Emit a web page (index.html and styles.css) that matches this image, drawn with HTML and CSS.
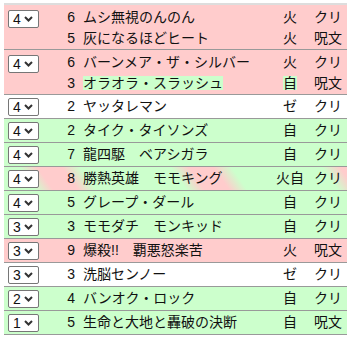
FILE: index.html
```html
<!DOCTYPE html>
<html lang="ja">
<head>
    <meta charset="UTF-8">
    <title>デッキリスト</title>
    <link rel="stylesheet" href="styles.css">
</head>
<body>

<div class="deck">
    <table class="cards">
        <colgroup>
            <col class="c-num">
            <col class="c-cost">
            <col class="c-name">
            <col class="c-civ">
            <col class="c-type">
            <col class="c-more">
        </colgroup>
        <thead>
            <tr>
                <th>枚数</th>
                <th>C</th>
                <th class="name">名前</th>
                <th>文明</th>
                <th class="type">種類</th>
                <th></th>
            </tr>
        </thead>
        <tbody>
            <tr class="fire twin">
                <td><div class="sel"><span>4</span><svg width="9" height="6" viewBox="0 0 9 6"><path d="M1 1 L4.5 4.5 L8 1"/></svg></div></td>
                <td class="cost"><div>6</div><div>5</div></td>
                <td class="name"><div>ムシ無視のんのん</div><div>灰になるほどヒート</div></td>
                <td class="civ"><div>火</div><div>火</div></td>
                <td class="type"><div>クリ</div><div>呪文</div></td>
                <td class="more"><div class="box"></div></td>
            </tr>
            <tr class="fire twin">
                <td><div class="sel"><span>4</span><svg width="9" height="6" viewBox="0 0 9 6"><path d="M1 1 L4.5 4.5 L8 1"/></svg></div></td>
                <td class="cost"><div>6</div><div>3</div></td>
                <td class="name"><div>バーンメア・ザ・シルバー</div><div><span class="hl">オラオラ・スラッシュ</span></div></td>
                <td class="civ"><div>火</div><div><span class="hl">自</span></div></td>
                <td class="type"><div>クリ</div><div>呪文</div></td>
                <td class="more"><div class="box"></div></td>
            </tr>
            <tr class="zero">
                <td><div class="sel"><span>4</span><svg width="9" height="6" viewBox="0 0 9 6"><path d="M1 1 L4.5 4.5 L8 1"/></svg></div></td>
                <td class="cost">2</td>
                <td class="name">ヤッタレマン</td>
                <td class="civ">ゼ</td>
                <td class="type">クリ</td>
                <td class="more"><div class="box"></div></td>
            </tr>
            <tr class="nature">
                <td><div class="sel"><span>4</span><svg width="9" height="6" viewBox="0 0 9 6"><path d="M1 1 L4.5 4.5 L8 1"/></svg></div></td>
                <td class="cost">2</td>
                <td class="name">タイク・タイソンズ</td>
                <td class="civ">自</td>
                <td class="type">クリ</td>
                <td class="more"><div class="box"></div></td>
            </tr>
            <tr class="nature">
                <td><div class="sel"><span>4</span><svg width="9" height="6" viewBox="0 0 9 6"><path d="M1 1 L4.5 4.5 L8 1"/></svg></div></td>
                <td class="cost">7</td>
                <td class="name">龍四駆　ベアシガラ</td>
                <td class="civ">自</td>
                <td class="type">クリ</td>
                <td class="more"><div class="box"></div></td>
            </tr>
            <tr class="multi">
                <td><div class="sel"><span>4</span><svg width="9" height="6" viewBox="0 0 9 6"><path d="M1 1 L4.5 4.5 L8 1"/></svg></div></td>
                <td class="cost">8</td>
                <td class="name">勝熱英雄　モモキング</td>
                <td class="civ">火自</td>
                <td class="type">クリ</td>
                <td class="more"><div class="box"></div></td>
            </tr>
            <tr class="nature">
                <td><div class="sel"><span>4</span><svg width="9" height="6" viewBox="0 0 9 6"><path d="M1 1 L4.5 4.5 L8 1"/></svg></div></td>
                <td class="cost">5</td>
                <td class="name">グレープ・ダール</td>
                <td class="civ">自</td>
                <td class="type">クリ</td>
                <td class="more"><div class="box"></div></td>
            </tr>
            <tr class="nature">
                <td><div class="sel"><span>3</span><svg width="9" height="6" viewBox="0 0 9 6"><path d="M1 1 L4.5 4.5 L8 1"/></svg></div></td>
                <td class="cost">3</td>
                <td class="name">モモダチ　モンキッド</td>
                <td class="civ">自</td>
                <td class="type">クリ</td>
                <td class="more"><div class="box"></div></td>
            </tr>
            <tr class="fire">
                <td><div class="sel"><span>3</span><svg width="9" height="6" viewBox="0 0 9 6"><path d="M1 1 L4.5 4.5 L8 1"/></svg></div></td>
                <td class="cost">9</td>
                <td class="name">爆殺!!　覇悪怒楽苦</td>
                <td class="civ">火</td>
                <td class="type">呪文</td>
                <td class="more"><div class="box"></div></td>
            </tr>
            <tr class="zero">
                <td><div class="sel"><span>3</span><svg width="9" height="6" viewBox="0 0 9 6"><path d="M1 1 L4.5 4.5 L8 1"/></svg></div></td>
                <td class="cost">3</td>
                <td class="name">洗脳センノー</td>
                <td class="civ">ゼ</td>
                <td class="type">クリ</td>
                <td class="more"><div class="box"></div></td>
            </tr>
            <tr class="nature">
                <td><div class="sel"><span>2</span><svg width="9" height="6" viewBox="0 0 9 6"><path d="M1 1 L4.5 4.5 L8 1"/></svg></div></td>
                <td class="cost">4</td>
                <td class="name">バンオク・ロック</td>
                <td class="civ">自</td>
                <td class="type">クリ</td>
                <td class="more"><div class="box"></div></td>
            </tr>
            <tr class="nature">
                <td><div class="sel"><span>1</span><svg width="9" height="6" viewBox="0 0 9 6"><path d="M1 1 L4.5 4.5 L8 1"/></svg></div></td>
                <td class="cost">5</td>
                <td class="name">生命と大地と轟破の決断</td>
                <td class="civ">自</td>
                <td class="type">呪文</td>
                <td class="more"><div class="box"></div></td>
            </tr>
            <tr class="zero">
                <td><div class="sel"><span>1</span><svg width="9" height="6" viewBox="0 0 9 6"><path d="M1 1 L4.5 4.5 L8 1"/></svg></div></td>
                <td class="cost">2</td>
                <td class="name">ドンドン吸い込むナウ</td>
                <td class="civ">水</td>
                <td class="type">呪文</td>
                <td class="more"><div class="box"></div></td>
            </tr>
        </tbody>
    </table>
</div>

</body>
</html>
```

FILE: styles.css
```css
html, body {
    margin: 0;
    overflow: hidden;
    background: #fff;
}

body {
    font-family: "Liberation Sans", "Noto Sans CJK JP", sans-serif;
    font-size: 14px;
    color: #111;
}

.deck {
    padding-left: 4px;
}

/* the list is scrolled a little, so the header row sits above the top edge */
.cards {
    border-collapse: collapse;
    table-layout: fixed;
    width: 380px;
    margin-top: -19px;
}

.c-num { width: 40px; }
.c-cost { width: 34px; }
.c-name { width: 192px; }
.c-civ { width: 40px; }
.c-type { width: 36px; }
.c-more { width: 38px; }

.cards th {
    font-weight: normal;
    line-height: 21px;
    padding: 1px 0 0 0;
    border-bottom: 2px solid #ddd;
    text-align: center;
}
.cards th.name { text-align: left; padding-left: 5px; }
.cards th.type { text-align: left; padding-left: 4px; }

.cards td {
    line-height: 21px;
    padding: 1px 0;
    border-bottom: 1px solid #999;
    vertical-align: middle;
    white-space: nowrap;
}
.twin td {
    vertical-align: top;
    padding: 2px 0 0 0;
}
.twin td div { line-height: 21px; }

.fire { background: #ffcccc; }
.nature { background: #ccffcc; }
.zero { background: #fff; }
/* two civilisations: soft diagonal stripes */
.multi {
    background: repeating-linear-gradient(55deg,
        #ccffcc 0, #ccffcc 26px, #ffcccc 41px, #ffcccc 61px, #ccffcc 76px, #ccffcc 124px);
}

.cost {
    text-align: right;
    padding-right: 3px !important;
}
.name { padding-left: 5px !important; }
.civ { text-align: center; }
.type { padding-left: 4px !important; }

.hl {
    display: inline-block;
    line-height: 14px;
    background: #ccffcc;
}

/* count picker */
.sel {
    display: flex;
    align-items: center;
    justify-content: space-between;
    box-sizing: border-box;
    width: 31px;
    height: 18px;
    margin-left: 4px;
    padding: 0 5px 0 4px;
    border: 1px solid #767676;
    border-radius: 2px;
    background: #fff;
    line-height: 16px;
}
.twin .sel { margin-top: 3px; }
.sel svg path {
    fill: none;
    stroke: #333;
    stroke-width: 2;
}

.more .box {
    box-sizing: border-box;
    width: 30px;
    height: 18px;
    margin-left: 3px;
    border: 1px solid #999;
    border-radius: 2px;
    background: #fff;
}
.twin .more .box { margin-top: 2px; }
```
